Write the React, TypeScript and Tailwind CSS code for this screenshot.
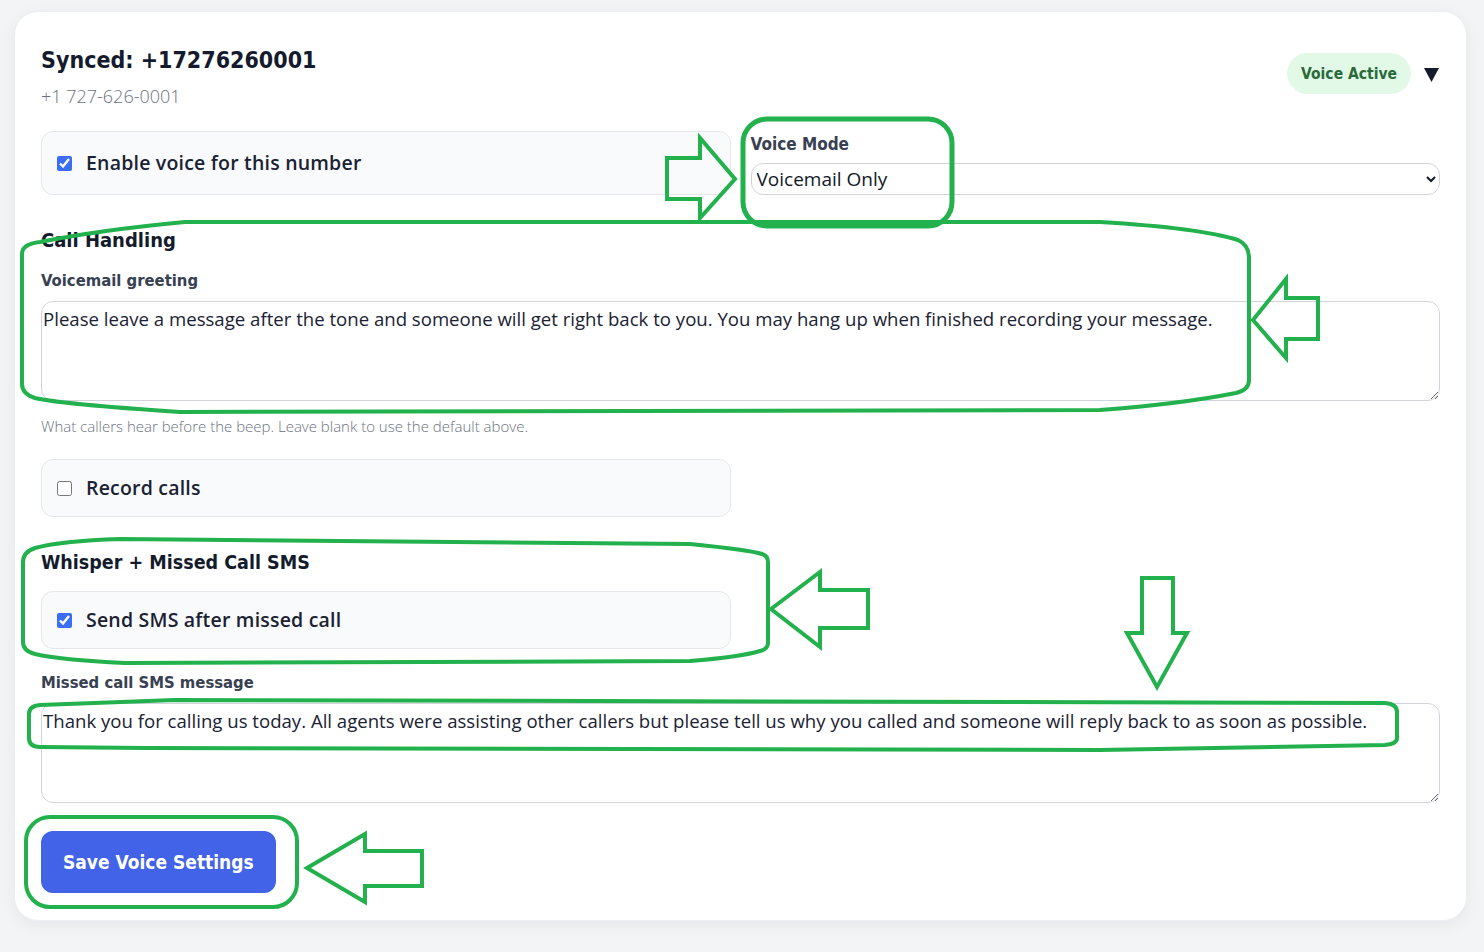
import { useState } from 'react'

const HEAD = "[font-family:'DejaVu_Sans_Condensed','DejaVu_Sans',sans-serif]"
const BODY = "[font-family:'Open_Sans','Noto_Sans',sans-serif]"

const GREETING =
  'Please leave a message after the tone and someone will get right back to you. You may hang up when finished recording your message.'
const SMS =
  'Thank you for calling us today. All agents were assisting other callers but please tell us why you called and someone will reply back to as soon as possible.'

function CheckCard({ label, checked, onChange }: { label: string; checked: boolean; onChange: (v: boolean) => void }) {
  return (
    <label className="flex h-full min-h-[58px] items-center gap-[14px] rounded-xl border border-[#e5e7eb] bg-[#f9fafb] pl-[15px]">
      <input
        type="checkbox"
        checked={checked}
        onChange={e => onChange(e.target.checked)}
        className="h-[15px] w-[15px] accent-[#3b6ef5]"
      />
      <span className={`${BODY} text-[19.5px] font-semibold tracking-[0.2px] text-[#1a2233]`}>{label}</span>
    </label>
  )
}

// green markup drawn over the screenshot
function Annotations() {
  const s = { fill: 'none', stroke: '#22b14c', strokeWidth: 4, strokeLinejoin: 'miter' as const }
  return (
    <svg className="pointer-events-none absolute left-0 top-0" width="1484" height="952" viewBox="0 0 1484 952">
      <path {...s} d="M667,158 L700,158 L700,138 L735,179 L700,218 L700,199 L667,199 Z" />
      <rect {...s} strokeWidth={5} x="743" y="119" width="209" height="107" rx="24" />
      <path
        {...s}
        d="M185,222 L1100,222 Q1200,228 1238,240 Q1249,245 1249,258 L1249,380 Q1249,390 1236,393 Q1180,404 1100,410 L180,412 Q60,404 35,398 Q22,394 22,384 L22,254 Q22,244 40,242 Q100,230 185,222 Z"
      />
      <path {...s} d="M1253,320 L1286,279 L1286,298 L1318,298 L1318,339 L1286,339 L1286,358 Z" />
      <path
        {...s}
        d="M120,539 L690,544 Q750,550 762,554 Q768,556 768,562 L768,643 Q768,649 760,651 Q740,657 690,661 L125,663 Q60,660 35,654 Q23,651 23,642 L23,562 Q23,552 35,548 Q60,541 120,539 Z"
      />
      <path {...s} d="M771,609 L820,572 L820,590 L868,590 L868,628 L820,628 L820,647 Z" />
      <path {...s} d="M1142,578 L1173,578 L1173,633 L1187,633 L1157,687 L1127,633 L1142,633 Z" />
      <path
        {...s}
        d="M40,705 L175,700 L1385,703 Q1397,704 1397,712 L1397,738 Q1397,744 1385,745 L1100,750 L145,748 L40,747 Q29,747 29,738 L29,714 Q29,706 40,705 Z"
      />
      <rect {...s} x="26" y="817" width="271" height="90" rx="24" />
      <path {...s} d="M307,868 L365,834 L365,851 L422,851 L422,886 L365,886 L365,902 Z" />
    </svg>
  )
}

export default function App() {
  const [enabled, setEnabled] = useState(true)
  const [record, setRecord] = useState(false)
  const [sendSms, setSendSms] = useState(true)

  return (
    <div className="relative min-h-screen bg-[#f3f4f6] pl-[14px] pr-[17px] pt-[11px]">
      <div className="rounded-[24px] border border-[#eceef1] bg-white px-[26px] pb-[27px] pt-[33px] shadow-[0_4px_16px_rgba(15,23,42,0.06)]">
        {/* header */}
        <div className="flex items-start justify-between">
          <div>
            <h2 className={`${HEAD} text-[23px] font-bold leading-[30px] text-[#141b2d]`}>Synced: +17276260001</h2>
            <p className={`${BODY} mt-[10px] text-[18px] font-light leading-[22px] text-[#6b7280]`}>+1 727-626-0001</p>
          </div>
          <div className="mt-[8px] flex items-center gap-[13px] pr-[1px]">
            <span className={`${HEAD} flex h-[41px] items-center rounded-full bg-[#e1f9e6] px-[14px] pt-[2px] text-[15.5px] font-bold text-[#2a6a3a]`}>
              Voice Active
            </span>
            <svg width="15" height="14" viewBox="0 0 15 14" className="mt-[3px]">
              <path d="M0,0 L15,0 L7.5,14 Z" fill="#141b2d" />
            </svg>
          </div>
        </div>

        {/* enable + mode */}
        <div className="mt-[24px] grid grid-cols-2 gap-x-5">
          <CheckCard label="Enable voice for this number" checked={enabled} onChange={setEnabled} />
          <div>
            <div className={`${HEAD} mt-[2px] text-[17px] font-bold leading-[22px] text-[#374151]`}>Voice Mode</div>
            <select
              defaultValue="voicemail"
              className={`${BODY} mt-[8px] h-[32px] w-full rounded-xl border border-[#d1d5db] bg-white pl-[1px] text-[19px] text-[#111827]`}
            >
              <option value="voicemail">Voicemail Only</option>
              <option value="forward">Forward to Phone</option>
              <option value="ivr">IVR Menu</option>
            </select>
          </div>
        </div>

        {/* call handling */}
        <h3 className={`${HEAD} mt-[33px] text-[20px] font-bold leading-[24px] text-[#141b2d]`}>Call Handling</h3>
        <div className={`${HEAD} mt-[19px] text-[16.5px] font-bold leading-[20px] text-[#374151]`}>Voicemail greeting</div>
        <textarea
          defaultValue={GREETING}
          className={`${BODY} mt-[10px] block h-[100px] w-full rounded-xl border border-[#d1d5db] px-[1px] pt-[3px] text-[18.6px] leading-[27px] text-[#1a2233] outline-none`}
        />
        <p className={`${BODY} mt-[15px] text-[15px] font-light leading-[20px] text-[#6b7280]`}>
          What callers hear before the beep. Leave blank to use the default above.
        </p>

        <div className="mt-[23px] grid grid-cols-2 gap-x-5">
          <CheckCard label="Record calls" checked={record} onChange={setRecord} />
        </div>

        {/* whisper */}
        <h3 className={`${HEAD} mt-[34px] text-[19.5px] font-bold leading-[24px] text-[#141b2d]`}>Whisper + Missed Call SMS</h3>
        <div className="mt-[16px] grid grid-cols-2 gap-x-5">
          <CheckCard label="Send SMS after missed call" checked={sendSms} onChange={setSendSms} />
        </div>

        <div className={`${HEAD} mt-[24px] text-[16.5px] font-bold leading-[20px] text-[#374151]`}>Missed call SMS message</div>
        <textarea
          defaultValue={SMS}
          className={`${BODY} mt-[10px] block h-[100px] w-full rounded-xl border border-[#d1d5db] px-[1px] pt-[3px] text-[18.6px] leading-[27px] text-[#1a2233] outline-none`}
        />

        <button
          type="button"
          className={`${HEAD} mt-[28px] h-[62px] rounded-xl bg-[#4263e8] px-[22px] text-[19px] font-bold text-white`}
        >
          Save Voice Settings
        </button>
      </div>
      <Annotations />
    </div>
  )
}
